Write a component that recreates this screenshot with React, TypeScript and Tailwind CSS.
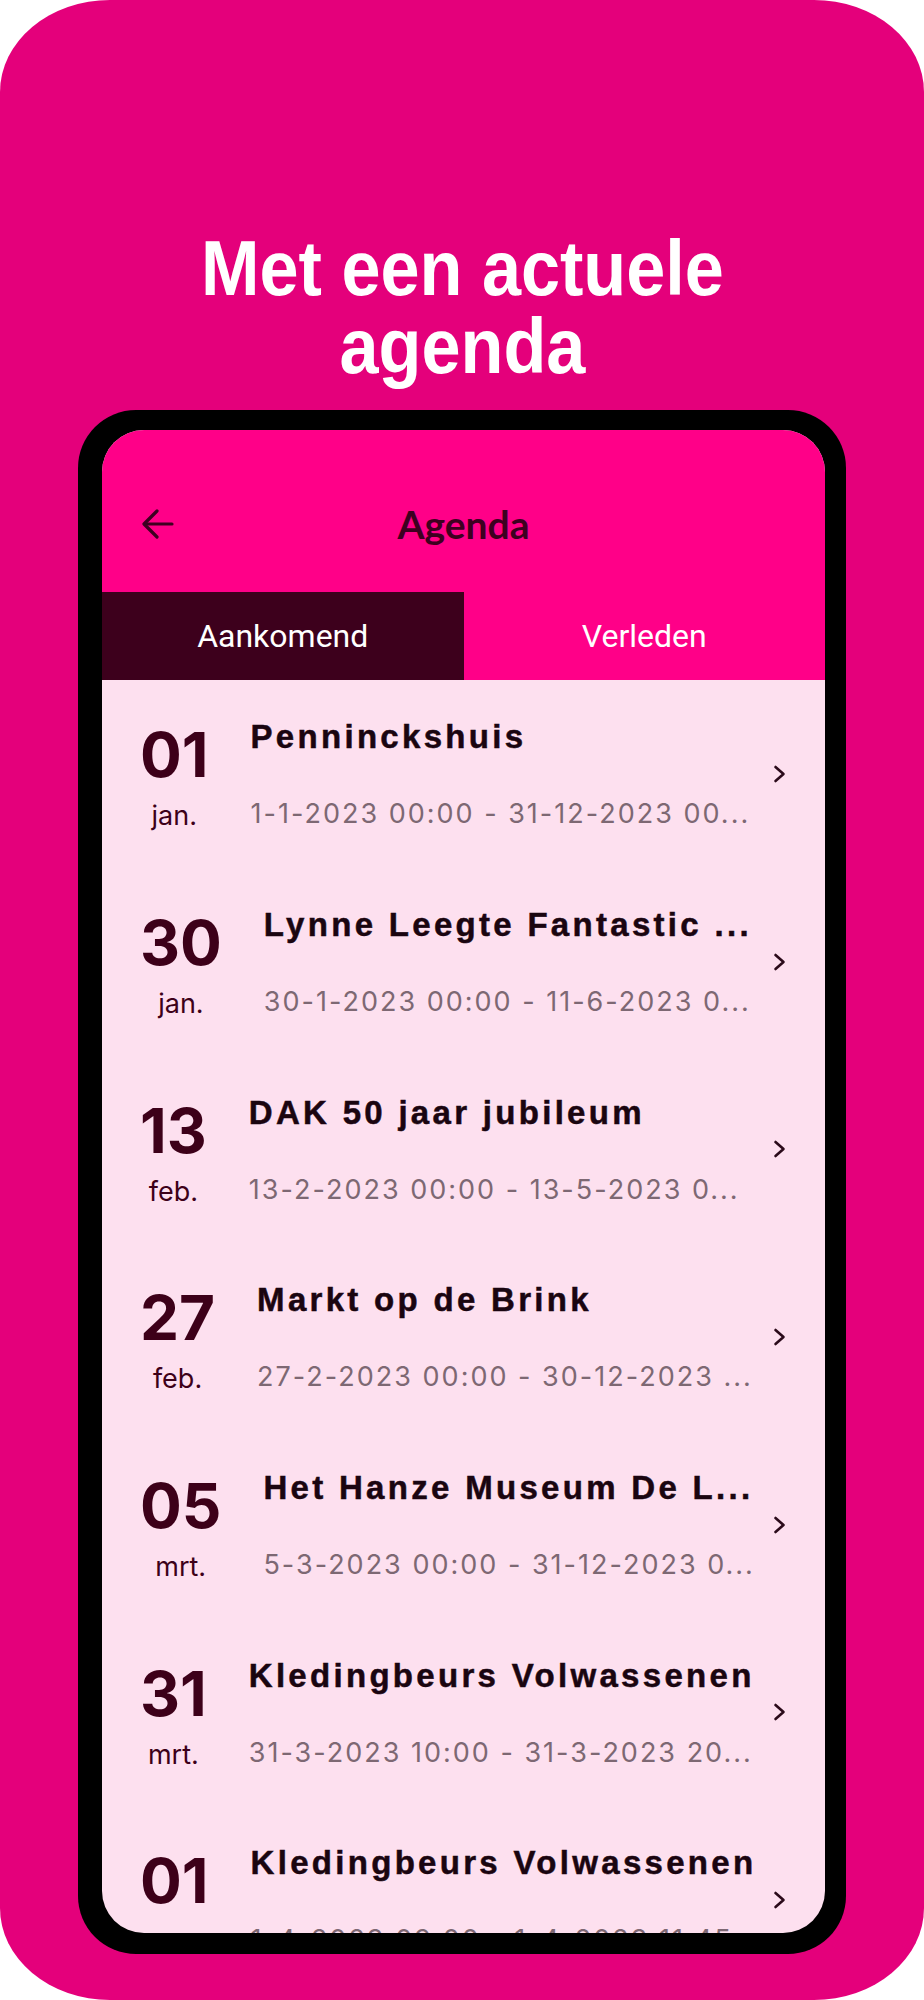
import React from "react";

type AgendaItem = {
  day: string;
  month: string;
  title: string;
  time: string;
};

const items: AgendaItem[] = [
  { day: "01", month: "jan.", title: "Penninckshuis", time: "1-1-2023 00:00 - 31-12-2023 00..." },
  { day: "30", month: "jan.", title: "Lynne Leegte Fantastic ...", time: "30-1-2023 00:00 - 11-6-2023 0..." },
  { day: "13", month: "feb.", title: "DAK 50 jaar jubileum", time: "13-2-2023 00:00 - 13-5-2023 0..." },
  { day: "27", month: "feb.", title: "Markt op de Brink", time: "27-2-2023 00:00 - 30-12-2023 ..." },
  { day: "05", month: "mrt.", title: "Het Hanze Museum De L...", time: "5-3-2023 00:00 - 31-12-2023 0..." },
  { day: "31", month: "mrt.", title: "Kledingbeurs Volwassenen", time: "31-3-2023 10:00 - 31-3-2023 20..." },
  { day: "01", month: "apr.", title: "Kledingbeurs Volwassenen", time: "1-4-2023 09:00 - 1-4-2023 11:45" },
];

function BackArrow() {
  return (
    <svg width="32" height="30" viewBox="0 0 32 30" fill="none" stroke="#3D0020" strokeWidth="3.2" strokeLinecap="round" strokeLinejoin="round">
      <path d="M30 15H3" />
      <path d="M15 2L2 15l13 13" />
    </svg>
  );
}

function Chevron() {
  return (
    <svg width="13" height="18" viewBox="0 0 13 18" fill="none" stroke="#2B0A1A" strokeWidth="2.6" strokeLinecap="round" strokeLinejoin="round">
      <path d="M2.5 2l8 7-8 7" />
    </svg>
  );
}

function AgendaRow({ item }: { item: AgendaItem }) {
  return (
    <div className="flex h-[187.7px] shrink-0 items-center pl-[38px] pr-[39px]">
      <div className="flex shrink-0 flex-col items-center pt-[10px] text-[#3D0019] font-['Inter',sans-serif]">
        <div className="text-[62px] leading-[62px] font-bold">{item.day}</div>
        <div className="mt-[13px] text-[27px] leading-[34px]">{item.month}</div>
      </div>
      <div className="ml-[42px] flex min-w-0 flex-1 flex-col pt-[4px]">
        <div className="whitespace-nowrap overflow-hidden text-[33px] leading-[40px] font-bold tracking-[3.3px] text-[#1A0510] [-webkit-text-stroke:0.5px_#1A0510] font-['Liberation_Sans',Arial,sans-serif]">
          {item.title}
        </div>
        <div className="mt-[37px] whitespace-nowrap overflow-hidden text-[27px] leading-[40px] tracking-[2px] text-[#7D6873] font-['Inter',sans-serif]">
          {item.time}
        </div>
      </div>
      <div className="ml-[6px] shrink-0">
        <Chevron />
      </div>
    </div>
  );
}

function Phone() {
  return (
    <div className="mt-[25px] h-[1544px] w-[768px] rounded-[58px] bg-black pl-[24px] pr-[21px] pt-[20px] pb-[21px]">
      <div className="flex h-full flex-col overflow-hidden rounded-[42px] bg-[#FDE0EF]">
        <div className="bg-[#FF0088] pt-[64px]">
          <div className="grid h-[60px] grid-cols-[1fr_auto_1fr] items-center px-[40px]">
            <BackArrow />
            <div className="text-[39px] font-bold text-[#3D0020] font-['Lato',sans-serif]">Agenda</div>
            <div />
          </div>
          <div className="mt-[38px] grid h-[88px] grid-cols-2 text-[32px] text-white font-['Roboto',sans-serif]">
            <div className="flex items-center justify-center bg-[#3D001C]">Aankomend</div>
            <div className="flex items-center justify-center">Verleden</div>
          </div>
        </div>
        <div className="flex flex-col">
          {items.map((item, i) => (
            <AgendaRow key={i} item={item} />
          ))}
        </div>
      </div>
    </div>
  );
}

export default function App() {
  return (
    <div className="h-[2000px] w-[924px] bg-white">
      <div className="flex h-full flex-col items-center overflow-hidden rounded-[110px/92px] bg-[#E4007B] pt-[229px]">
        <h1 className="scale-x-[0.9] text-center text-[78px] leading-[78px] font-bold text-white font-['Liberation_Sans',Arial,sans-serif]">
          Met een actuele
          <br />
          agenda
        </h1>
        <Phone />
      </div>
    </div>
  );
}
